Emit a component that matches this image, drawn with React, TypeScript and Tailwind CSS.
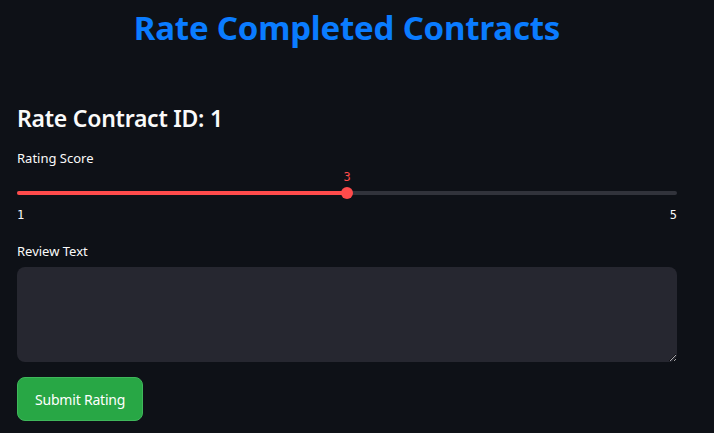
import { useState } from "react";

const mono = { fontFamily: '"DejaVu Sans Mono", monospace' };

export default function App() {
  const [score, setScore] = useState(3);
  const [review, setReview] = useState("");
  const pct = ((score - 1) / 4) * 100;

  return (
    <div
      className="w-[714px] h-[433px] overflow-hidden bg-[#0e1117] text-[#fafafa]"
      style={{ fontFamily: '"Noto Sans", "Open Sans", sans-serif' }}
    >
      <div className="w-[694px] flex flex-col">
        <h1 className="pt-[6px] text-center text-[33px] leading-[44px] font-bold text-[#0a7cff] tracking-[-0.2px]">
          Rate Completed Contracts
        </h1>

        <div className="px-[17px] pt-[53px] flex flex-col">
          <h2 className="text-[23px] leading-[30px] font-semibold tracking-[-0.25px]">
            Rate Contract ID: 1
          </h2>

          <div className="mt-[16px] text-[13px] leading-[18px]">Rating Score</div>

          {/* slider */}
          <div className="mt-[2px] flex flex-col">
            <div className="relative h-[16px]">
              <span
                className="absolute top-0 -ml-[10px] w-[20px] text-center text-[12px] leading-[16px] text-[#ff4b4b]"
                style={{ ...mono, left: `${pct}%` }}
              >
                {score}
              </span>
            </div>
            <div className="relative mt-[2px] h-[12px] flex items-center">
              <div className="w-full h-[4px] rounded-full bg-[#31333b] flex">
                <div className="h-full rounded-full bg-[#ff4b4b]" style={{ width: `${pct}%` }} />
              </div>
              <div
                className="absolute top-0 w-[12px] h-[12px] -ml-[6px] rounded-full bg-[#ff4b4b]"
                style={{ left: `${pct}%` }}
              />
              <input
                type="range"
                min={1}
                max={5}
                value={score}
                onChange={(e) => setScore(Number(e.target.value))}
                className="absolute inset-0 w-full opacity-0 cursor-pointer"
              />
            </div>
            <div className="mt-[8px] flex justify-between text-[12px] leading-[16px]" style={mono}>
              <span>1</span>
              <span>5</span>
            </div>
          </div>

          <div className="mt-[19px] text-[13px] leading-[18px]">Review Text</div>
          <textarea
            value={review}
            onChange={(e) => setReview(e.target.value)}
            className="mt-[7px] block w-full h-[95px] rounded-[8px] bg-[#262730] px-3 py-2 text-[14px] outline-none"
          />

          <div className="mt-[15px] flex">
            <button className="h-[44px] px-[17px] rounded-[8px] bg-[#28a745] border border-[#3fb75b] text-[14px] tracking-[-0.2px] text-white">
              Submit Rating
            </button>
          </div>
        </div>
      </div>
    </div>
  );
}
